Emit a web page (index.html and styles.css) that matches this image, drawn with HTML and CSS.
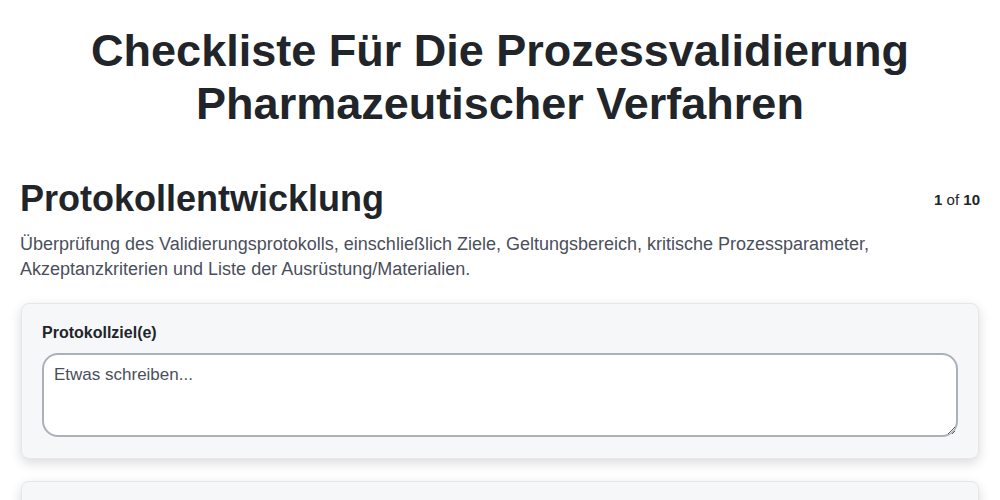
FILE: index.html
```html
<!DOCTYPE html>
<html lang="de">
<head>
<meta charset="utf-8">
<title>Checkliste</title>
<link rel="stylesheet" href="styles.css">
</head>
<body>
<div class="page">
  <h1 class="title">Checkliste Für Die Prozessvalidierung Pharmazeutischer Verfahren</h1>
  <section class="section">
    <div class="section-head">
      <h2 class="section-title">Protokollentwicklung</h2>
      <div class="pager"><b>1</b> of <b>10</b></div>
    </div>
    <p class="section-desc">Überprüfung des Validierungsprotokolls, einschließlich Ziele, Geltungsbereich, kritische Prozessparameter, Akzeptanzkriterien und Liste der Ausrüstung/Materialien.</p>
    <div class="card">
      <label class="field-label" for="f1">Protokollziel(e)</label>
      <textarea id="f1" class="field-input" placeholder="Etwas schreiben..."></textarea>
    </div>
    <div class="card">
      <label class="field-label" for="f2">Geltungsbereich</label>
      <textarea id="f2" class="field-input" placeholder="Etwas schreiben..."></textarea>
    </div>
  </section>
</div>
</body>
</html>
```
FILE: styles.css
```css
* { box-sizing: border-box; }
html, body { margin: 0; padding: 0; background: #fff; }
body {
  font-family: "Liberation Sans", Arial, Helvetica, sans-serif;
  color: #212529;
}
.page {
  padding: 24px 20px 20px 20px;
}
.title {
  margin: 0 40px;
  font-size: 45px;
  line-height: 53px;
  font-weight: 700;
  text-align: center;
  color: #212529;
}
.section {
  margin-top: 47px;
}
.section-head {
  display: flex;
  justify-content: space-between;
  align-items: flex-start;
}
.section-title {
  margin: 0;
  font-size: 36px;
  line-height: 1.2;
  font-weight: 700;
  color: #212529;
}
.pager {
  font-size: 15px;
  line-height: 1.2;
  margin-top: 14px;
  color: #212529;
}
.pager b { font-weight: 700; }
.section-desc {
  margin: 12px 0 21px 0;
  font-size: 18px;
  line-height: 25px;
  color: #4a4f5c;
}
.card {
  background: #f6f7f9;
  border: 1px solid #e6e7eb;
  border-radius: 8px;
  padding: 19px 20px 21px 20px;
  box-shadow: 0 4px 12px rgba(0, 0, 0, 0.15);
  margin: 0 1px 22px 1px;
}
.field-label {
  display: block;
  font-size: 16px;
  line-height: 1.2;
  font-weight: 700;
  color: #212529;
  margin-bottom: 11px;
}
.field-input {
  display: block;
  width: 100%;
  height: 84px;
  border: 2px solid #aab1b9;
  border-radius: 16px;
  background: #fff;
  padding: 8px 10px;
  font-family: "Liberation Sans", Arial, Helvetica, sans-serif;
  font-size: 17px;
  line-height: 24px;
  color: #212529;
  resize: vertical;
  outline: none;
}
.field-input::placeholder {
  color: #4a4f5c;
  opacity: 1;
}
```
